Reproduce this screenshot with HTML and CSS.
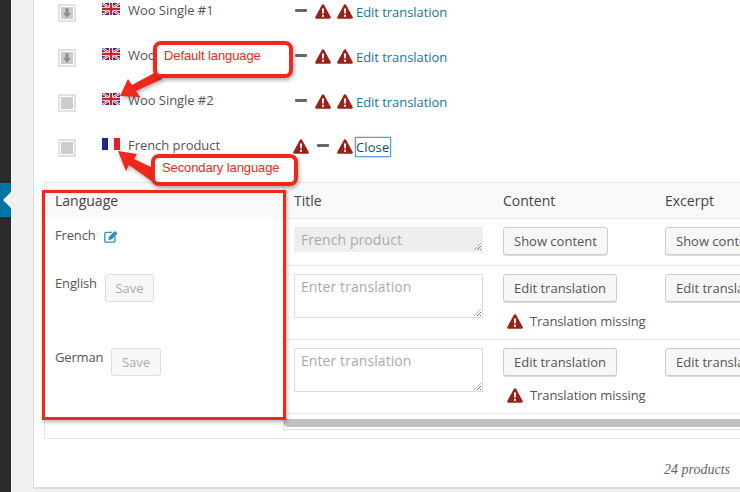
FILE: index.html
```html
<!DOCTYPE html>
<html lang="en">
<head>
<meta charset="utf-8">
<title>Products translation</title>
<link rel="stylesheet" href="styles.css">
</head>
<body>
<svg class="defs" width="0" height="0" aria-hidden="true">
  <defs>
    <symbol id="warn" viewBox="0 0 16 15">
      <path d="M8 0.2 C8.5 0.2 8.9 0.5 9.2 1 L15.7 12.9 C16.2 13.8 15.7 14.8 14.7 14.8 L1.3 14.8 C0.3 14.8 -0.2 13.8 0.3 12.9 L6.8 1 C7.1 0.5 7.5 0.2 8 0.2 Z" fill="#9b2118"/>
      <path d="M6.9 4.6 H9.1 L8.8 9.6 H7.2 Z M7 10.7 H9 V12.7 H7 Z" fill="#fff"/>
    </symbol>
    <symbol id="uk" viewBox="0 0 18 12">
      <rect width="18" height="12" fill="#25327c"/>
      <path d="M0 0 L18 12 M18 0 L0 12" stroke="#fff" stroke-width="2.6"/>
      <path d="M0 0 L18 12 M18 0 L0 12" stroke="#d0303c" stroke-width="1"/>
      <path d="M9 0 V12 M0 6 H18" stroke="#fff" stroke-width="4"/>
      <path d="M9 0 V12 M0 6 H18" stroke="#d0202c" stroke-width="2.4"/>
    </symbol>
    <symbol id="fr" viewBox="0 0 18 12">
      <rect width="6" height="12" fill="#1c2a80"/>
      <rect x="6" width="6" height="12" fill="#f4f4f6"/>
      <rect x="12" width="6" height="12" fill="#ec1c2a"/>
    </symbol>
    <symbol id="down" viewBox="0 0 10 12">
      <path d="M3 0 H7 V6 H10 L5 12 L0 6 H3 Z" fill="#8e8e8e"/>
    </symbol>
  </defs>
</svg>

<div class="layout">
  <aside class="sidebar"><div class="side-item"></div></aside>
  <main class="page">
    <section class="panel">
      <div class="row">
        <span class="check"><svg class="down"><use href="#down"/></svg></span>
        <svg class="flag"><use href="#uk"/></svg>
        <span class="name">Woo Single #1</span>
        <span class="status"><i class="dash"></i><svg class="warn"><use href="#warn"/></svg><svg class="warn"><use href="#warn"/></svg><a class="link">Edit translation</a></span>
      </div>
      <div class="row">
        <span class="check"><svg class="down"><use href="#down"/></svg></span>
        <svg class="flag"><use href="#uk"/></svg>
        <span class="name">Woo Single #1</span>
        <span class="status"><i class="dash"></i><svg class="warn"><use href="#warn"/></svg><svg class="warn"><use href="#warn"/></svg><a class="link">Edit translation</a></span>
      </div>
      <div class="row">
        <span class="check"></span>
        <svg class="flag"><use href="#uk"/></svg>
        <span class="name">Woo Single #2</span>
        <span class="status"><i class="dash"></i><svg class="warn"><use href="#warn"/></svg><svg class="warn"><use href="#warn"/></svg><a class="link">Edit translation</a></span>
      </div>
      <div class="row">
        <span class="check"></span>
        <svg class="flag"><use href="#fr"/></svg>
        <span class="name">French product</span>
        <span class="status"><svg class="warn"><use href="#warn"/></svg><i class="dash"></i><svg class="warn"><use href="#warn"/></svg><a class="link focus">Close</a></span>
      </div>

      <div class="editor">
        <div class="lang">
          <div class="cell-head">Language</div>
          <div class="tr tr-a"><span class="lang-name">French</span>
            <svg class="pencil" viewBox="0 0 15 13"><path d="M11 6.5 V11 A1.2 1.2 0 0 1 9.8 12.2 H2 A1.2 1.2 0 0 1 .8 11 V3.6 A1.2 1.2 0 0 1 2 2.4 H8" fill="none" stroke="#2d8fc0" stroke-width="1.3"/><path d="M5 6.8 L10.8 1 L13.6 3.4 L7.6 9.4 L4.4 10 Z" fill="#2d8fc0"/></svg>
          </div>
          <div class="tr tr-b"><span class="lang-name">English</span><span class="btn save">Save</span></div>
          <div class="tr tr-b"><span class="lang-name">German</span><span class="btn save">Save</span></div>
        </div>
        <div class="scroll">
          <div class="table">
            <div class="cell-head fields"><span>Title</span><span>Content</span><span>Excerpt</span></div>
            <div class="tr tr-a fields">
              <div class="area disabled">French product</div>
              <div><span class="btn">Show content</span></div>
              <div><span class="btn">Show content</span></div>
            </div>
            <div class="tr tr-b fields">
              <div class="area tall">Enter translation</div>
              <div><span class="btn">Edit translation</span><p class="missing"><svg class="warn"><use href="#warn"/></svg>Translation missing</p></div>
              <div><span class="btn">Edit translation</span></div>
            </div>
            <div class="tr tr-b fields">
              <div class="area tall">Enter translation</div>
              <div><span class="btn">Edit translation</span><p class="missing"><svg class="warn"><use href="#warn"/></svg>Translation missing</p></div>
              <div><span class="btn">Edit translation</span></div>
            </div>
          </div>
          <div class="scrollbar"></div>
        </div>
      </div>
      <p class="count">24 products</p>
    </section>
  </main>
</div>

<div class="note note-default">Default language</div>
<div class="note note-secondary">Secondary language</div>
<svg class="arrows" viewBox="0 0 740 492" aria-hidden="true">
  <path d="M158 71 L132 85 L128 79 L120 96 L140 97 L136 91 L162 79 Z" fill="#f0281c"/>
  <path d="M153 168 L134 159 L137 154 L118 151 L126 171 L129 165 L153 182 Z" fill="#f0281c"/>
</svg>
<div class="highlight"></div>
</body>
</html>
```
FILE: styles.css
```css
* { box-sizing: border-box; }
html, body { margin: 0; height: 492px; overflow: hidden; }
body {
  position: relative;
  background: #f1f1f1;
  font-family: "Open Sans", sans-serif;
  font-size: 13px;
  color: #555;
}
.defs { position: absolute; }
.layout { display: flex; height: 492px; }

.sidebar { width: 11px; flex: none; background: #2b2b2b; padding-top: 183px; }
.side-item { position: relative; height: 34px; background: #0074a2; }
.side-item::after {
  content: "";
  position: absolute;
  right: 0;
  top: 9px;
  border: 8px solid transparent;
  border-left-width: 0;
  border-right-color: #f1f1f1;
}

.page { flex: 1; min-width: 0; padding-left: 22px; }
.panel {
  height: 489px;
  background: #fff;
  border-left: 1px solid #ddd;
  border-bottom: 2px solid #ddd;
  padding-left: 10px;
  overflow: hidden;
}

.row {
  height: 45px;
  padding: 4px 0 0 14px;
  display: grid;
  grid-template-columns: 44px 26px 165px auto;
  align-items: start;
}
.check {
  width: 18px;
  height: 18px;
  border: 2px solid #e2e2e2;
  background: #ccc;
  box-shadow: inset 0 0 0 1px #fff;
  display: flex;
  align-items: center;
  justify-content: center;
}
.down { width: 8px; height: 10px; }
.flag { width: 18px; height: 12px; margin-top: -1px; }
.name { line-height: 14px; margin-top: -1px; letter-spacing: -.05px; }
.status {
  display: grid;
  grid-template-columns: 22px 22px 19px auto;
  align-items: start;
  justify-items: start;
}
.warn { width: 16px; height: 15px; display: block; }
.dash {
  display: block;
  width: 12px;
  height: 3px;
  margin: 5px 0 0 2px;
  background: #666;
  border-radius: 1px;
}
.link { color: #21759b; line-height: 18px; margin-top: -1px; white-space: nowrap; letter-spacing: -.05px; }
.focus {
  color: #124964;
  padding: 0 1px 0 0;
  margin: -2px 0 0 -1px;
  line-height: 18px;
  letter-spacing: .1px;
  border: 1px solid #5b9dd9;
  box-shadow: 0 0 2px rgba(30, 140, 190, .6);
}

.editor {
  display: flex;
  height: 257px;
  margin-top: 2px;
  border: 1px solid #e5e5e5;
  border-right: 0;
}
.lang { width: 238px; flex: none; }
.scroll {
  flex: 1;
  min-width: 0;
  height: 247px;
  border-left: 1px solid #ddd;
  border-bottom: 1px solid #ddd;
  overflow: hidden;
}
.table { width: 560px; }
.cell-head {
  height: 36px;
  padding: 8px 10px;
  background: #f9f9f9;
  border-bottom: 1px solid #e8e8e8;
  font-size: 14px;
  line-height: 20px;
  color: #444;
  white-space: nowrap;
}
.lang .cell-head { border-bottom-color: #f9f9f9; }
.fields {
  display: grid;
  grid-template-columns: 209px 162px 200px;
  padding-left: 10px;
}
.tr { border-bottom: 1px solid #e8e8e8; padding-top: 8px; }
.lang .tr { border-bottom-color: transparent; padding-left: 10px; display: flex; align-items: flex-start; }
.lang .tr-a { padding-top: 7px; }
.tr-a { height: 47px; }
.tr-b { height: 74px; }
.lang-name { line-height: 18px; color: #555; margin-right: 8px; letter-spacing: -.15px; }
.pencil { width: 15px; height: 13px; margin-top: 4px; }
.btn {
  display: inline-block;
  height: 28px;
  padding: 0 10px;
  line-height: 26px;
  border: 1px solid #ccc;
  border-radius: 3px;
  background: #f7f7f7;
  box-shadow: 0 1px 0 #ddd;
  white-space: nowrap;
  color: #555;
}
.save { color: #aaa; background: #f7f7f7; border-color: #ddd; box-shadow: none; padding: 0 9.5px; }
.area {
  position: relative;
  width: 189px;
  height: 25px;
  padding: 2px 6px;
  border: 1px solid #ddd;
  font-size: 14px;
  line-height: 20px;
  letter-spacing: .08px;
  color: #aaa;
}
.area::after {
  content: "";
  position: absolute;
  right: 1px;
  bottom: 1px;
  width: 7px;
  height: 7px;
  background: repeating-linear-gradient(135deg, transparent 0 1.5px, #777 1.5px 2.5px);
  clip-path: polygon(100% 0, 100% 100%, 0 100%);
}
.disabled { background: #eee; border-color: #eee; }
.tall { height: 44px; }
.missing {
  display: flex;
  align-items: center;
  gap: 7px;
  margin: 10px 0 0 4px;
  white-space: nowrap;
  line-height: 18px;
  letter-spacing: -.1px;
}
.scrollbar { height: 8px; margin-top: 5px; background: #c1c1c1; border-radius: 0 0 0 4px; }
.count {
  margin: 23px 10px 0 0;
  text-align: right;
  font: italic 14px "Liberation Serif", serif;
  color: #666;
}

.note {
  position: absolute;
  z-index: 3;
  background: #fff;
  border: 4px solid #f0281c;
  border-radius: 8px;
  box-shadow: 1px 2px 4px rgba(0, 0, 0, .35);
  font-family: "Liberation Sans", sans-serif;
  font-size: 13px;
  line-height: 16px;
  letter-spacing: -.1px;
  color: #f0281c;
  white-space: nowrap;
}
.note-default { left: 153px; top: 41px; width: 140px; height: 37px; padding: 3px 7px; }
.note-secondary { left: 151px; top: 154px; width: 147px; height: 32px; padding: 2px 7px; }
.arrows { position: absolute; left: 0; top: 0; width: 740px; height: 492px; z-index: 2; filter: drop-shadow(1px 2px 2px rgba(0,0,0,.3)); }
.highlight {
  position: absolute;
  z-index: 2;
  left: 42px;
  top: 190px;
  width: 244px;
  height: 230px;
  border: 3px solid #f0281c;
  box-shadow: 1px 2px 4px rgba(0, 0, 0, .3);
}
```
